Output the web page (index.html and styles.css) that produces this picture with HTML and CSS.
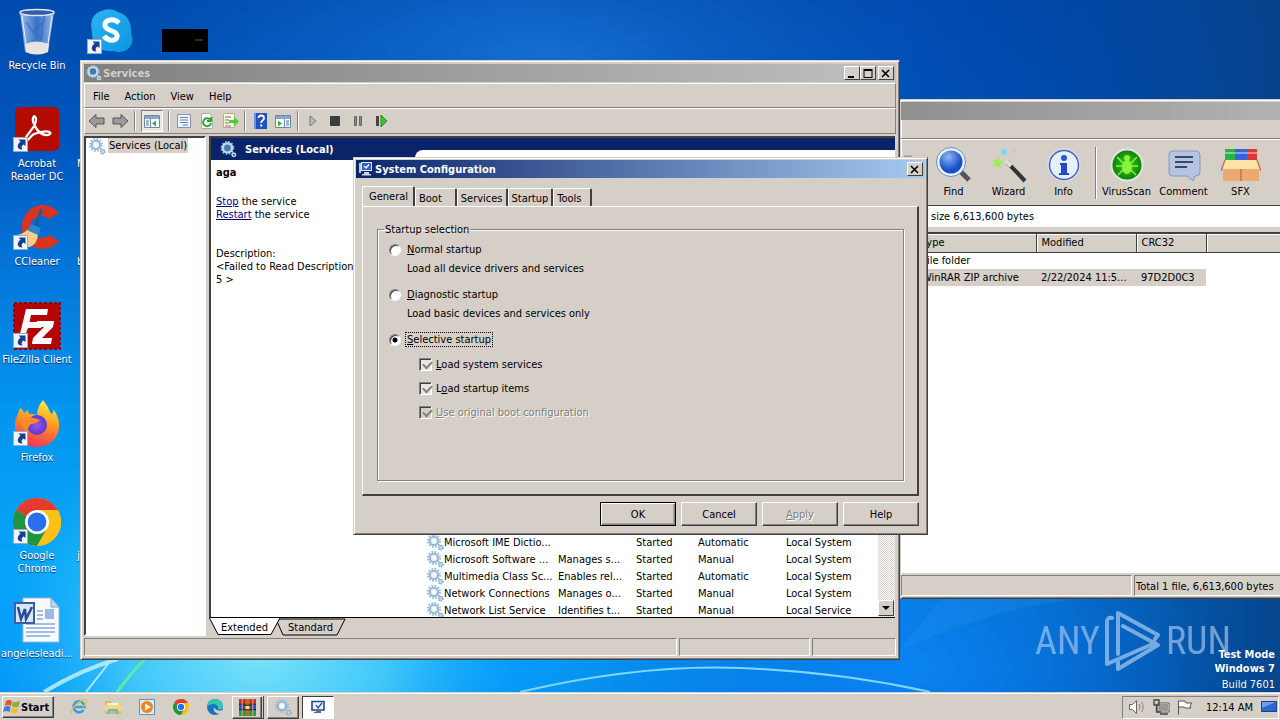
FILE: index.html
```html
<!DOCTYPE html>
<html lang="en">
<head>
<meta charset="utf-8">
<title>Desktop</title>
<link rel="stylesheet" href="styles.css">
</head>
<body>
<svg class="defs" aria-hidden="true">
  <defs>
    <linearGradient id="glass" x1="0" x2="1"><stop offset="0" stop-color="#c9dcf3"/><stop offset=".5" stop-color="#3f78cc"/><stop offset="1" stop-color="#c0d3ee"/></linearGradient>
    <linearGradient id="sky" x1="0" y1="0" x2="1" y2="1"><stop offset="0" stop-color="#2bb5f5"/><stop offset="1" stop-color="#0a96e0"/></linearGradient>
    <linearGradient id="fox" x1=".7" y1="0" x2=".4" y2="1"><stop offset="0" stop-color="#fff04a"/><stop offset=".45" stop-color="#ff9a1f"/><stop offset="1" stop-color="#f5305a"/></linearGradient>
    <radialGradient id="foxcore"><stop offset="0" stop-color="#9a52f2"/><stop offset="1" stop-color="#5a3bc8"/></radialGradient>
    <radialGradient id="lens" cx=".4" cy=".3"><stop offset="0" stop-color="#8fb8f5"/><stop offset="1" stop-color="#1a4fc8"/></radialGradient>
    <radialGradient id="lime"><stop offset="0" stop-color="#38d81a"/><stop offset="1" stop-color="#0d7a0a"/></radialGradient>
  </defs>
  <symbol id="gears" viewBox="0 0 16 16">
    <circle cx="6.500" cy="6.500" r="5.600" fill="none" stroke="#9dbcd6" stroke-width="2" stroke-dasharray="1.700 1.220"/>
    <circle cx="6.500" cy="6.500" r="3.900" fill="#dcebf7" stroke="#8db0cf" stroke-width="1.600"/>
    <circle cx="6.500" cy="6.500" r="1.800" fill="#fff"/>
    <circle cx="13" cy="12.800" r="2" fill="#c5dcee" stroke="#7ea3c4" stroke-width="1.400" stroke-dasharray="1.200 .6"/>
  </symbol>
  <symbol id="gears-bold" viewBox="0 0 16 16">
    <circle cx="7" cy="6.500" r="4.400" fill="#4c7aa6" stroke="#b9dcf5" stroke-width="2.400"/>
    <circle cx="7" cy="6.500" r="6" fill="none" stroke="#b9dcf5" stroke-width="1" stroke-dasharray="1.500 1.650"/>
    <circle cx="13" cy="13" r="1.600" fill="none" stroke="#b9dcf5" stroke-width="1.500"/>
  </symbol>
  <symbol id="shortcut" viewBox="0 0 15 15">
    <rect x=".5" y=".5" width="14" height="14" fill="#f1f6fb" stroke="#9ab"/>
    <path d="M5.500 2.500h7V9l-2-1.500C8.500 8.500 8 10.500 9.500 12.500 5 13 2.500 9 7.500 4.500z" fill="#173f8f"/>
  </symbol>
  <symbol id="chrome" viewBox="0 0 48 48">
    <circle cx="24" cy="24" r="24" fill="#fbc116"/>
    <path d="M24 24 3.200 12A24 24 0 0 1 44.800 12z" fill="#e33b2e"/>
    <path d="M24 24 3.200 12A24 24 0 0 0 24 48L34.400 30z" fill="#229342"/>
    <path d="M24 12H44.800A24 24 0 0 1 24 48L34.400 30z" fill="#fbc116"/>
    <circle cx="24" cy="24" r="12" fill="#fff"/><circle cx="24" cy="24" r="9.400" fill="#2a6ef0"/>
  </symbol>
  <symbol id="pc" viewBox="0 0 16 16">
    <rect x="3.500" y="1.500" width="10" height="8" fill="#2f5fc4" stroke="#dfe7f2"/>
    <path d="M1 2h2v10H1z" fill="#b9c7dc"/>
    <path d="m6 5 2 2 3-3.500" fill="none" stroke="#fff" stroke-width="1.300"/>
    <path d="M6 11h5v2h2v1.500H4V13h2z" fill="#cdd6e2"/>
  </symbol>
  <symbol id="books" viewBox="0 0 16 16">
    <path d="M0 0h16v5H0z" fill="#c8321e"/><path d="M0 5h16v5H0z" fill="#2f4fc0"/><path d="M0 10h16v6H0z" fill="#2d9a3a"/>
    <path d="M0 5h16M0 10h16" stroke="#222"/><path d="M6 0h4v16H6z" fill="#b96a32"/><path d="M5.500 6h5v4h-5z" fill="#f5e08a" stroke="#432"/>
    <path d="M3 0v16M13 0v16" stroke="#eac" stroke-width=".8"/>
  </symbol>
</svg>

<main class="desktop">
  <svg class="wallpaper" viewBox="0 0 1280 692" preserveAspectRatio="none" aria-hidden="true">
    <defs>
      <linearGradient id="base" x1="0" y1="0" x2="0" y2="1"><stop offset="0" stop-color="#004cae"/><stop offset=".2" stop-color="#0055bc"/><stop offset=".4" stop-color="#0478dc"/><stop offset=".6" stop-color="#0396ee"/><stop offset=".82" stop-color="#06a4f8"/><stop offset="1" stop-color="#0699f8"/></linearGradient>
      <linearGradient id="shade" x1="0" x2="1"><stop offset=".4" stop-color="#06409a" stop-opacity="0"/><stop offset=".7" stop-color="#0048b4" stop-opacity=".35"/><stop offset="1" stop-color="#054188" stop-opacity=".95"/></linearGradient>
      <radialGradient id="glow"><stop offset="0" stop-color="#82e6fa"/><stop offset=".5" stop-color="#4fd2fa" stop-opacity=".8"/><stop offset="1" stop-color="#20b8fa" stop-opacity="0"/></radialGradient>
      <radialGradient id="top"><stop offset="0" stop-color="#1a78da" stop-opacity=".8"/><stop offset="1" stop-color="#1470d4" stop-opacity="0"/></radialGradient>
      <radialGradient id="low"><stop offset="0" stop-color="#0a84f4" stop-opacity=".9"/><stop offset="1" stop-color="#0a70e4" stop-opacity="0"/></radialGradient>
    </defs>
    <rect width="1280" height="692" fill="url(#base)"/>
    <ellipse cx="560" cy="60" rx="420" ry="160" fill="url(#top)"/>
    <ellipse cx="260" cy="640" rx="260" ry="240" fill="url(#glow)"/>
    <rect width="1280" height="692" fill="url(#shade)"/>
    <ellipse cx="900" cy="670" rx="320" ry="160" fill="url(#low)"/>
    <path d="M44 692Q80 670 118 659" stroke="#c8f2fb" stroke-width="4" fill="none" opacity=".8"/>
    <path d="M86 692 112 659" stroke="#a8e8fa" stroke-width="2"/>
    <path d="M117 692Q132 672 145 659" stroke="#62e8a0" stroke-width="3" fill="none"/>
    <path d="M520 692Q640 664 740 668T930 692" stroke="#7fd6fa" stroke-width="2" fill="none"/>
    <path d="M900 650Q1000 606 1080 599H940z" fill="#3fa8ff" opacity=".15"/>
  </svg>

  <nav class="icons" aria-label="Desktop icons">
    <button class="icon r1"><span class="art"><svg width="40" height="48" viewBox="0 0 40 48"><path d="M3 4 8 44Q20 49 31 44L37 4z" fill="url(#glass)" opacity=".8"/><path d="M8 36Q19 31 32 36L31 44Q20 49 9 44z" fill="#e6e4e0"/><path d="M9 14 16 24 28 12M27 8l-3 24" stroke="#2f62b8" stroke-width="2" fill="none" opacity=".5"/><ellipse cx="20" cy="4.500" rx="17" ry="3" fill="#2e5dad" stroke="#dfe5ee" stroke-width="1.500"/><path d="m5 8 5 35M35 8l-5 35" stroke="#e7f0fb" stroke-width="1"/></svg></span>Recycle Bin</button>
    <button class="icon r2"><span class="art"><svg width="48" height="48" viewBox="0 0 48 48"><rect x="2" y="1" width="44" height="44" rx="5" fill="#b30b00"/><path d="M12 33C16 25 24 20 23 13 22 7 18 12 21 18 25 28 33 31 37 28 39 24 29 25 21 28 16 31 15 37 11 35" fill="none" stroke="#fff" stroke-width="2.300" stroke-linecap="round"/></svg><svg class="arrow"><use href="#shortcut"/></svg></span>Acrobat<br>Reader DC</button>
    <button class="icon r3"><span class="art"><svg width="48" height="48" viewBox="0 0 48 48"><path d="M46 9A21 22 0 1 0 46 37L36 31A11 11 0 1 1 36 15z" fill="#d8341f"/><path d="m27 5 3 1-6 19-4-1z" fill="#1c5d9e"/><path d="m18 20 10 4-3 7-11-5z" fill="#2b88c8"/><path d="M14 26Q8 32 0 31 4 44 17 43 24 40 25 31z" fill="#f3cf8d"/></svg><svg class="arrow"><use href="#shortcut"/></svg></span>CCleaner</button>
    <button class="icon r4"><span class="art"><svg width="48" height="48" viewBox="0 0 48 48"><rect x="1" y="1" width="46" height="46" fill="#b40404" stroke="#8c0505" stroke-width="2" stroke-dasharray="3 2"/><path d="M13 7h22l-1 6H18l-1.500 7H29l-1 6H15l-4 10H6zM24 19h17l-1 6-11 11h10l-1 6H19l1-6 11-11h-8z" fill="#fff"/></svg><svg class="arrow"><use href="#shortcut"/></svg></span>FileZilla Client</button>
    <button class="icon r5"><span class="art"><svg width="48" height="48" viewBox="0 0 48 48"><path d="M30 0Q35 6 38 14q3-1 2-5c6 7 8 18 4 26C40 43 32 47 24 47 11 47 2 38 2 26 2 18 5 15 7 8q3 1 4 5l4-3q0 5 4 4l5 1Q24 7 30 0z" fill="url(#fox)"/><circle cx="24" cy="25" r="10" fill="url(#foxcore)"/><path d="M8 19Q16 15 27 20 23 24 18 24 14 27 15 33 8 27 8 19z" fill="#ff8a2a"/></svg><svg class="arrow"><use href="#shortcut"/></svg></span>Firefox</button>
    <button class="icon r6"><span class="art"><svg width="48" height="48"><use href="#chrome"/></svg><svg class="arrow"><use href="#shortcut"/></svg></span>Google<br>Chrome</button>
    <button class="icon r7"><span class="art"><svg width="48" height="48" viewBox="0 0 48 48"><path d="M10 2h28l8 9v35H10z" fill="#f7faff" stroke="#9db7e0"/><path d="M38 2v9h8z" fill="#c6d7f2" stroke="#7f9fd0"/><path d="M24 15h6M24 19h6M24 23h6M13 28h29M13 32h29M13 36h29M13 40h24" stroke="#86a8dc" stroke-width="1.500"/><rect x="32" y="13" width="9" height="10" fill="#9db7e6"/><rect x="2" y="7" width="19" height="20" fill="#dbe5f8" stroke="#3b5da8" stroke-width="2"/><path d="m5 11 3 12 4-10 1 10 6-12" fill="none" stroke="#2a4a98" stroke-width="2.500"/></svg></span>angelesleadi...</button>
    <button class="icon r1"><span class="art"><svg width="48" height="48" viewBox="0 0 48 48"><path d="M17 2Q26 0 31 4 45 8 44 25 48 35 41 41 34 46 27 43 5 45 5 24 1 6 17 2z" fill="url(#sky)"/><path d="M32 15Q28 11 23 12 17 13 18 18 19 21 25 23 31 25 30 29 29 33 23 32 19 31 17 28" fill="none" stroke="#fff" stroke-width="5"/></svg><svg class="arrow"><use href="#shortcut"/></svg></span></button>
    <button class="icon r2 cut"><span class="art"></span>M</button>
    <button class="icon r3 cut"><span class="art"></span>b</button>
    <button class="icon r6 cut"><span class="art"></span>j</button>
    <button class="icon r1" aria-label="Hidden item"><span class="art"><svg width="46" height="48" viewBox="0 0 46 48"><path d="M0 21h46v23H0z"/><path d="M33 32h8" stroke="#555"/></svg></span></button>
  </nav>

  <div class="watermark">
    <span>ANY</span>
    <svg width="56" height="62" viewBox="0 0 56 62" fill="none" stroke="#b5d3f5" stroke-width="4" stroke-linejoin="round" stroke-linecap="round"><path d="M7 8Q2 7 2 12V54L50 33M13 44V3L53 25 50 29M18 16 53 35 13 59V52"/></svg>
    <span>RUN</span>
  </div>
  <p class="build"><b>Test Mode</b><b>Windows 7</b><span>Build 7601</span></p>

  <section class="window rar" aria-label="Archive manager">
    <header class="title inactive"></header>
    <div class="rar-menu"></div>
    <div class="rar-tools">
      <button class="tool edge"><svg width="36" height="36" viewBox="0 0 36 36"><path d="M4 4h12v5h5v20H12z" fill="#9ca3b8"/></svg></button>
      <button class="tool"><svg width="36" height="36" viewBox="0 0 36 36"><path d="m23 23 10 10" stroke="#555" stroke-width="5"/><circle cx="15" cy="15" r="13" fill="url(#lens)" stroke="#eaf1fb" stroke-width="3"/><circle cx="15" cy="15" r="14.500" fill="none" stroke="#6c8fc6"/></svg>Find</button>
      <button class="tool"><svg width="36" height="36" viewBox="0 0 36 36"><path d="m16 15 18 19" stroke="#333" stroke-width="4"/><path d="m15 14 5 5" stroke="#ddd" stroke-width="4"/><path d="m7 10 2 4 4 1-4 2 1 4-4-2-4 1 2-4-2-3 4 0z" fill="#9af04a"/><circle cx="13" cy="5" r="3" fill="#6fdcf2"/><circle cx="23" cy="4" r="2" fill="#f3b4bb"/></svg>Wizard</button>
      <button class="tool"><svg width="36" height="36" viewBox="0 0 36 36"><circle cx="18" cy="18" r="16.500" fill="#d4e2f8"/><circle cx="18" cy="18" r="14.500" fill="#e6effc" stroke="#4666b4" stroke-width="1.500"/><circle cx="18" cy="11" r="3" fill="#2d55d0"/><path d="M14 16h7v10h2v2H13v-2h2v-8h-1z" fill="#2348c4"/></svg>Info</button>
      <i class="rule"></i>
      <button class="tool wide"><svg width="36" height="36" viewBox="0 0 36 36"><circle cx="18" cy="18" r="15.500" fill="url(#lime)" stroke="#dbe8da" stroke-width="2"/><ellipse cx="18" cy="20" rx="5" ry="7" fill="#8bf23c"/><circle cx="18" cy="11" r="3" fill="#8bf23c"/><path d="m8 10 6 6M28 10l-6 6M7 19h7M29 19h-7M9 28l5-5M27 28l-5-5" stroke="#8bf23c" stroke-width="1.500"/></svg>VirusScan</button>
      <button class="tool"><svg width="36" height="36" viewBox="0 0 36 36"><path d="M6 4h24q4 0 4 4v17q0 4-4 4h-1l-2 5-6-5H6q-3 0-3-4V8q0-4 3-4z" fill="#b5c5df" stroke="#8499bd"/><path d="M9 10h18M9 15h18M9 20h12" stroke="#35486f" stroke-width="2"/></svg>Comment</button>
      <button class="tool wide"><svg width="40" height="36" viewBox="0 0 40 36"><path d="M4 2h10v14H4z" fill="#28b34a"/><path d="M14 2h12v14H14z" fill="#3565d8"/><path d="M26 2h10v14H26z" fill="#da3a34"/><path d="M4 6h10M14 6h12M26 6h10" stroke="#fff" stroke-opacity=".4" stroke-width="2"/><path d="M2 16h36v18H2z" fill="#ecaa70"/><path d="M4 13h32l4 9H0z" fill="#fbe3a8"/><path d="M4 13 0 24M36 13l4 11M20 22v12" stroke="#c07a48" stroke-width="1.500"/></svg>SFX</button>
    </div>
    <div class="address">size 6,613,600 bytes</div>
    <div class="rar-list">
      <table>
        <thead><tr><th class="c-type">Type</th><th class="c-mod">Modified</th><th class="c-crc">CRC32</th><th></th></tr></thead>
        <tbody>
          <tr><td>File folder</td><td></td><td></td><td></td></tr>
          <tr class="picked"><td>WinRAR ZIP archive</td><td>2/22/2024 11:5...</td><td>97D2D0C3</td><td></td></tr>
        </tbody>
      </table>
    </div>
    <footer class="status rar-status"><span class="grow"></span><span class="total">Total 1 file, 6,613,600 bytes</span></footer>
  </section>

  <section class="window services" aria-label="Services">
    <header class="title inactive">
      <svg width="16" height="16"><use href="#gears-bold"/></svg><h2>Services</h2>
      <span class="caps">
        <button aria-label="Minimize"><svg width="10" height="9"><path d="M1 7h6v2H1z"/></svg></button>
        <button aria-label="Maximize"><svg width="10" height="9"><path d="M.5 0h9v9h-9z M1.500 2v6h7V2z" fill-rule="evenodd"/></svg></button>
        <button class="apart" aria-label="Close"><svg width="10" height="9"><path d="m1 1 7 7M8 1 1 8" stroke="#000" stroke-width="1.600"/></svg></button>
      </span>
    </header>
    <nav class="menu"><button>File</button><button>Action</button><button>View</button><button>Help</button></nav>
    <div class="toolbar">
      <button aria-label="Back"><svg width="18" height="16" viewBox="0 0 18 16"><path d="m1 8 7-6.500V5h8v6H8v3.500z" fill="#999" stroke="#555"/></svg></button>
      <button aria-label="Forward"><svg width="18" height="16" viewBox="0 0 18 16"><path d="m17 8-7-6.500V5H2v6h8v3.500z" fill="#999" stroke="#555"/></svg></button>
      <i></i>
      <button class="pressed" aria-label="Show tree"><svg width="18" height="16" viewBox="0 0 18 16"><path d="M1.500 2.500h15v12h-15z" fill="#fff" stroke="#7186a8"/><path d="M2 3h14v3H2z" fill="#8ba4cf"/><path d="M7.500 6v8" stroke="#7186a8"/><path d="M3 8h3M3 10h3M3 12h3" stroke="#4a6fb5"/><path d="m13 7.500-4 3 4 3z" fill="#3fae2a"/></svg></button>
      <i></i>
      <button aria-label="Properties"><svg width="18" height="16" viewBox="0 0 18 16"><path d="M2.500 1.500h13v13h-13z" fill="#eef3fa" stroke="#8395b0"/><path d="M5 4.500h8M5 7h8M5 9.500h8M8 12h5" stroke="#6b83aa"/></svg></button>
      <button aria-label="Refresh"><svg width="18" height="16" viewBox="0 0 18 16"><path d="M3.500.5h8l3 3v12h-11z" fill="#fafcf8" stroke="#a8b0a0"/><path d="M12 6.500A4 4 0 1 0 13 10M13 4v4H9" fill="none" stroke="#2f9e2a" stroke-width="1.800"/></svg></button>
      <button aria-label="Export"><svg width="18" height="16" viewBox="0 0 18 16"><path d="M2.500.5h11v14h-11z" fill="#fbf8df" stroke="#b5ae8c"/><path d="M4 4h6M4 7h4M4 10h4M4 13h6" stroke="#777"/><path d="M8 7h5V4l5 4.500-5 4.500v-3H8z" fill="#4ccc36"/></svg></button>
      <i></i>
      <button aria-label="Help"><svg width="18" height="16" viewBox="0 0 18 16"><path d="M3 0h13v16H3z" fill="#2350bd"/><path d="M3 0h2v16H3z" fill="#6d8fdf"/><path d="M7.500 5q0-2.500 2.700-2.500T13 5q0 1.500-1.500 2.400T10.300 10" fill="none" stroke="#fff" stroke-width="1.800"/><path d="M9.300 11.500h2v2h-2z" fill="#fff"/></svg></button>
      <button aria-label="Action pane"><svg width="18" height="16" viewBox="0 0 18 16"><path d="M1.500 2.500h15v12h-15z" fill="#fff" stroke="#7186a8"/><path d="M2 3h14v3H2z" fill="#8ba4cf"/><path d="M10.500 6v8" stroke="#7186a8"/><path d="M12 8h3M12 10h3M12 12h3" stroke="#4a6fb5"/><path d="m4 7.500 4 3-4 3z" fill="#3fae2a"/></svg></button>
      <i></i>
      <button aria-label="Start service"><svg width="18" height="16" viewBox="0 0 18 16"><path d="m6 3 6 5-6 5z" fill="#bbb" stroke="#777"/></svg></button>
      <button aria-label="Stop service"><svg width="18" height="16" viewBox="0 0 18 16"><rect x="3" y="3" width="10" height="10" rx="1" fill="#3c3c3c"/></svg></button>
      <button aria-label="Pause service"><svg width="18" height="16" viewBox="0 0 18 16"><path d="M4.500 3.500h2v9h-2zM9.500 3.500h2v9h-2z" fill="#888" stroke="#666"/></svg></button>
      <button aria-label="Restart service"><svg width="18" height="16" viewBox="0 0 18 16"><path d="M3 3h3v10H3z" fill="#444"/><path d="m8 2 6 6-6 6z" fill="#3cc22c" stroke="#2a8f20"/></svg></button>
    </div>
    <div class="panes">
      <div class="tree"><button><svg width="17" height="17"><use href="#gears"/></svg><span>Services (Local)</span></button></div>
      <div class="right">
        <div class="view">
          <div class="banner"><svg width="17" height="17"><use href="#gears-bold"/></svg><h3>Services (Local)</h3></div>
          <div class="view-body">
            <div class="detail">
              <h4>aga</h4>
              <p><a href="#stop">Stop</a> the service<br><a href="#restart">Restart</a> the service</p>
              <p class="desc">Description:<br>&lt;Failed to Read Description.<br>5 &gt;</p>
            </div>
            <div class="list">
              <table>
                <tr><td class="n"><svg width="17" height="17"><use href="#gears"/></svg>Microsoft IME Dictio...</td><td class="d"></td><td class="s">Started</td><td class="t">Automatic</td><td>Local System</td></tr>
                <tr><td class="n"><svg width="17" height="17"><use href="#gears"/></svg>Microsoft Software ...</td><td>Manages s...</td><td>Started</td><td>Manual</td><td>Local System</td></tr>
                <tr><td class="n"><svg width="17" height="17"><use href="#gears"/></svg>Multimedia Class Sc...</td><td>Enables rel...</td><td>Started</td><td>Automatic</td><td>Local System</td></tr>
                <tr><td class="n"><svg width="17" height="17"><use href="#gears"/></svg>Network Connections</td><td>Manages o...</td><td>Started</td><td>Manual</td><td>Local System</td></tr>
                <tr><td class="n"><svg width="17" height="17"><use href="#gears"/></svg>Network List Service</td><td>Identifies t...</td><td>Started</td><td>Manual</td><td>Local Service</td></tr>
              </table>
              <div class="scroll"><button aria-label="Scroll down"><svg width="8" height="4"><path d="M0 0h8L4 4z"/></svg></button></div>
            </div>
          </div>
        </div>
        <div class="sheet-tabs" role="tablist">
          <svg class="tab-shapes" width="140" height="18" aria-hidden="true"><path d="M67 1h69l-8 16H74z" fill="#d5cfc8" stroke="#000"/><path d="M.5 0 9 16.500h53L71 0z" fill="#fff"/><path d="M.5 0 9 16.500h53L71 0" fill="none" stroke="#000"/></svg>
          <button role="tab">Extended</button><button role="tab">Standard</button>
        </div>
      </div>
    </div>
    <footer class="status"><span class="grow"></span><span class="s2"></span><span class="s3"></span></footer>
  </section>

  <section class="window dialog" role="dialog" aria-label="System Configuration">
    <header class="title active">
      <svg width="16" height="16"><use href="#pc"/></svg><h2>System Configuration</h2>
      <span class="caps"><button aria-label="Close"><svg width="10" height="9"><path d="m1 1 7 7M8 1 1 8" stroke="#000" stroke-width="1.600"/></svg></button></span>
    </header>
    <div class="dialog-body">
      <div class="tabs" role="tablist"><button role="tab" class="on">General</button><button role="tab" class="t2">Boot</button><button role="tab">Services</button><button role="tab">Startup</button><button role="tab" class="t5">Tools</button></div>
      <div class="panel">
        <fieldset>
          <legend>Startup selection</legend>
          <div class="choice"><input type="radio" name="mode" id="m1"><label for="m1"><u>N</u>ormal startup</label></div>
          <p class="hint">Load all device drivers and services</p>
          <div class="choice"><input type="radio" name="mode" id="m2"><label for="m2"><u>D</u>iagnostic startup</label></div>
          <p class="hint">Load basic devices and services only</p>
          <div class="choice"><input type="radio" name="mode" id="m3" checked><label class="focus" for="m3"><u>S</u>elective startup</label></div>
          <div class="checks">
            <div class="check"><input type="checkbox" id="c1" checked><label for="c1"><u>L</u>oad system services</label></div>
            <div class="check"><input type="checkbox" id="c2" checked><label for="c2">L<u>o</u>ad startup items</label></div>
            <div class="check"><input type="checkbox" id="c3" checked disabled><label for="c3"><u>U</u>se original boot configuration</label></div>
          </div>
        </fieldset>
      </div>
      <div class="actions"><button class="default">OK</button><button>Cancel</button><button disabled><u>A</u>pply</button><button>Help</button></div>
    </div>
  </section>
</main>

<footer class="taskbar">
  <button class="start"><svg width="18" height="16" viewBox="0 0 18 16"><path d="M3 2Q6 0 9 2L8 7Q5 5 2 7z" fill="#e8542a"/><path d="M10 2.500Q13 4 17 2L15.500 7.500Q12 9 9 7.500z" fill="#7cb82e"/><path d="M1.500 8Q5 6 7.500 8L6.500 13Q3 11 0 13z" fill="#3a7fe0"/><path d="M8.500 8.500Q12 10 15 8.500L14 14Q11 15 7.500 13.500z" fill="#f5c02a"/></svg>Start</button>
  <div class="quick">
    <button aria-label="Internet Explorer"><svg width="18" height="18" viewBox="0 0 18 18"><path d="M13.500 12A5.500 5.500 0 1 1 14.500 9H5" fill="none" stroke="#39a0e0" stroke-width="2.600"/><path d="M2 16Q-1 13 7 6T16 2Q18 4 13 9" fill="none" stroke="#e8c040" stroke-width="1.400"/></svg></button>
    <button aria-label="Explorer"><svg width="18" height="18" viewBox="0 0 18 18"><path d="M1 3h6l1 2h9v11H1z" fill="#e0bb55"/><path d="M3 5h12v4H3z" fill="#fdf6d0"/><path d="M1 7h16v6H1z" fill="#f3d980"/><path d="M4 11h10v5h-2v-3H6v3H4z" fill="#64b5e8"/></svg></button>
    <button aria-label="Media Player"><svg width="18" height="18" viewBox="0 0 18 18"><path d="M1.500 1.500h15v15h-15z" fill="#dceaf5" stroke="#5a94c8"/><circle cx="9" cy="9" r="6" fill="#f08418"/><path d="m7 5.500 6 3.500-6 3.500z" fill="#fff"/></svg></button>
    <button aria-label="Chrome"><svg width="16" height="16"><use href="#chrome"/></svg></button>
    <button aria-label="Edge"><svg width="18" height="18" viewBox="0 0 18 18"><circle cx="9" cy="9" r="8" fill="#1673c4"/><path d="M1 9Q2 1 9 1t8 7Q17 12 12 11.500 13 7 8 6 3 6 1 9z" fill="#35c6b0"/><path d="M17 12Q10 14 8 9 6 14 13 16 16 15 17 12z" fill="#d5cfc8"/></svg></button>
  </div>
  <div class="tasks">
    <button aria-label="WinRAR" class="stack"><svg width="17" height="17"><use href="#books"/></svg></button>
    <button aria-label="Services"><svg width="17" height="17"><use href="#gears"/></svg></button>
    <button aria-label="System Configuration" class="current"><svg width="16" height="16" viewBox="0 0 16 16"><path d="M2 2.500h12v8.500H2z" fill="#eaf1fb" stroke="#22459a" stroke-width="1.600"/><path d="m6 6 2 3 4-5" fill="none" stroke="#22459a" stroke-width="1.300"/><path d="M6 12h5v2H4v-1h2z" fill="#667"/></svg></button>
  </div>
  <div class="tray">
    <svg width="18" height="16" viewBox="0 0 18 16"><path d="M1.500 5.500h3l4-4v13l-4-4h-3z" fill="#fff" stroke="#666"/><path d="M11 5q2 3 0 6M13.500 3q3.500 5 0 10" fill="none" stroke="#888"/></svg>
    <svg width="18" height="16" viewBox="0 0 18 16"><path d="M6.500 4.500h10v8h-10z" fill="#999" stroke="#fff"/><path d="M6 4h11v9H6z" fill="none" stroke="#555"/><path d="M2 1h5v5H2zM4.500 6v7H9M8 15h8" fill="none" stroke="#444" stroke-width="1.300"/></svg>
    <svg width="18" height="16" viewBox="0 0 18 16"><path d="M2.500 15.500V1.500M3 2h6l1 2h6l-2 3 1 2H9L8 8H3" fill="#fff" stroke="#555"/></svg>
    <time>12:14 AM</time>
    <svg width="16" height="14" viewBox="0 0 16 14"><path d="M.5 1.500h15v10H.5z" fill="#2c66cf" stroke="#1b3f86"/><path d="M1 2h14L1 8z" fill="#6d9eea"/></svg>
  </div>
</footer>
</body>
</html>
```

FILE: styles.css
```css
* { box-sizing: border-box; }
:root { --face: #d5cfc8; --dark: #404040; --mid: #808080; }
body {
  margin: 0; height: 100vh; display: flex; flex-direction: column; overflow: hidden;
  font: 11px/13px "DejaVu Sans Condensed", "DejaVu Sans", sans-serif; color: #000; background: #0478dc;
}
button { font: inherit; color: inherit; background: none; border: 0; padding: 0; margin: 0; }
h2, h3, h4, p { margin: 0; font-size: 11px; }
p { font-weight: normal; }
svg { display: block; flex: none; }
.defs { position: absolute; width: 0; height: 0; }

.desktop { flex: 1; position: relative; overflow: hidden; }
.wallpaper { position: absolute; inset: 0; width: 100%; height: 100%; }

.icons {
  position: relative; padding-top: 8px; display: grid; grid-auto-flow: column;
  grid-template-rows: repeat(7, 98px); grid-auto-columns: 74px; justify-content: start;
}
.r1 { grid-row: 1; } .r2 { grid-row: 2; } .r3 { grid-row: 3; } .r4 { grid-row: 4; }
.r5 { grid-row: 5; } .r6 { grid-row: 6; } .r7 { grid-row: 7; }
.icon {
  display: flex; flex-direction: column; align-items: center; color: #fff; white-space: nowrap;
  text-shadow: 0 1px 1px #002a60;
}
.icon.cut { align-items: flex-start; padding-left: 3px; }
.art { position: relative; height: 51px; min-width: 48px; display: flex; justify-content: center; }
.art .arrow { position: absolute; left: 0; bottom: 5px; width: 15px; height: 15px; }

.watermark {
  position: absolute; right: 49px; bottom: 20px; display: flex; align-items: center; gap: 5px;
  font: 38px/62px "Liberation Sans Narrow", "Roboto Condensed", Roboto, sans-serif; color: #a9caf2; opacity: .65;
}
.build {
  position: absolute; right: 5px; bottom: 0; display: flex; flex-direction: column; align-items: flex-end;
  line-height: 14px; color: #fff; text-shadow: 0 0 1px #002a60;
}
.build span { margin-top: 2px; }

.window {
  position: absolute; display: flex; flex-direction: column; background: var(--face); padding: 2px;
  border: 1px solid; border-color: var(--face) var(--dark) var(--dark) var(--face);
  box-shadow: inset 1px 1px #fff, inset -1px -1px var(--mid);
}
.title { display: flex; align-items: center; gap: 1px; height: 18px; padding: 0 2px; }
.title h2 { flex: 1; }
.inactive { background: linear-gradient(90deg, #808080, #c0c0c0); color: #d5cfc8; }
.active { background: linear-gradient(90deg, #0a246a, #a6caf0); color: #fff; }
.caps { display: flex; }
.caps button {
  width: 16px; height: 14px; display: flex; align-items: center; justify-content: center;
  background: var(--face); border: 1px solid; border-color: #fff var(--dark) var(--dark) #fff;
}
.caps .apart { margin-left: 2px; }

.rar { left: 900px; top: 99px; width: 540px; height: 500px; padding: 2px 0; }
.rar .title { background: linear-gradient(90deg, #909090, #c0c0c0); }
.rar-menu { height: 19px; border-bottom: 1px solid var(--mid); box-shadow: 0 1px #fff; }
.rar-tools { display: flex; height: 66px; align-items: flex-start; padding-top: 8px; }
.tool { width: 55px; display: flex; flex-direction: column; align-items: center; gap: 2px; line-height: 14px; }
.tool.edge { width: 25px; align-items: flex-start; }
.tool.wide { width: 59px; }
.tool.edge svg { width: 25px; }
.rule { height: 52px; border-left: 1px solid var(--mid); border-right: 1px solid #fff; margin-left: 4px; }
.address {
  height: 23px; padding: 4px 0 0 30px; background: #fff;
  border-top: 1px solid var(--dark); border-bottom: 1px solid var(--face);
}
.rar-list { flex: 1; margin-top: 4px; background: #fff; border-top: 2px solid var(--dark); }
.rar-list table { border-collapse: collapse; table-layout: fixed; width: 100%; }
.rar-list th {
  height: 18px; padding: 0 5px; text-align: left; font-weight: normal; background: var(--face);
  border-right: 1px solid var(--dark); border-bottom: 1px solid var(--dark); box-shadow: inset 1px 1px #fff;
}
.rar-list td { height: 17px; padding: 0 5px; white-space: nowrap; }
.rar-list td:first-child, .rar-list th:first-child { padding-left: 21px; }
.c-type { width: 135px; } .c-mod { width: 100px; } .c-crc { width: 70px; }
.picked td:not(:last-child) { background: var(--face); }

.status { display: flex; gap: 2px; height: 20px; padding-top: 2px; }
.status span { border: 1px solid; border-color: var(--mid) #fff #fff var(--mid); }
.status .grow { flex: 1; }
.rar-status { height: 23px; }
.rar-status .grow { flex: none; width: 231px; }
.status .total { width: 200px; padding: 4px 0 0 1px; }
.s2 { width: 131px; } .s3 { width: 84px; }

.services { left: 80px; top: 60px; width: 820px; height: 600px; padding: 3px; }
.menu { display: flex; height: 25px; padding: 2px 8px 0; gap: 15px; align-items: center; border: 1px solid; border-color: #fff var(--mid) var(--mid) #fff; margin-top: 1px; }
.toolbar { display: flex; height: 26px; align-items: center; padding: 0 3px; gap: 5px; border: 1px solid; border-color: #fff var(--mid) var(--mid) #fff; }
.toolbar i { width: 2px; height: 20px; border-left: 1px solid var(--mid); border-right: 1px solid #fff; }
.toolbar .pressed { padding: 2px 1px; background: #ebe8e3; border: 1px solid; border-color: var(--mid) #fff #fff var(--mid); }
.panes { flex: 1; min-height: 0; display: flex; gap: 3px; margin-top: 2px; }
.tree { width: 122px; background: #fff; border: 2px solid; border-color: var(--dark) #fff #fff var(--dark); }
.tree button { display: flex; align-items: flex-start; gap: 2px; padding-left: 3px; }
.tree span { background: var(--face); padding: 0 1px; line-height: 15px; }
.right { flex: 1; display: flex; flex-direction: column; }
.view { flex: 1; display: flex; flex-direction: column; background: #fff; border: solid; border-width: 2px 0 0 2px; border-color: var(--dark); border-bottom: 1px solid #000; margin-right: 1px; }
.banner { height: 22px; background: #0a246a; color: #fff; display: flex; align-items: center; gap: 8px; padding-left: 9px; }
.view-body { flex: 1; display: flex; }
.detail { width: 204px; padding: 6px 5px; white-space: nowrap; }
.detail p { margin-top: 16px; }
.detail .desc { margin-top: 26px; }
.detail a { color: #00007f; }
.list { flex: 1; display: flex; align-items: flex-end; overflow: hidden; border-radius: 8px 0 0; margin-top: -10px; padding-left: 12px; background: #fff; }
.list table { flex: 1; border-collapse: collapse; table-layout: fixed; margin-bottom: -2px; }
.list td { height: 17px; padding: 0; line-height: 17px; white-space: nowrap; }
.n svg { float: left; }
.n { width: 131px; } .d { width: 78px; } .s { width: 62px; } .t { width: 88px; }
.scroll { align-self: stretch; width: 17px; display: flex; align-items: flex-end; padding-bottom: 1px; background: repeating-conic-gradient(#fff 0 25%, var(--face) 0 50%) 0 0 / 2px 2px; margin-top: 12px; }
.scroll button { width: 16px; height: 16px; display: grid; place-items: center; background: var(--face); border: 1px solid; border-color: #fff var(--dark) var(--dark) #fff; }
.sheet-tabs { position: relative; height: 18px; display: flex; padding: 1px 0 0 12px; gap: 20px; }
.tab-shapes { position: absolute; left: 0; top: 0; }
.sheet-tabs button { position: relative; }

.dialog { left: 353px; top: 157px; width: 575px; height: 378px; }
.dialog-body { flex: 1; display: flex; flex-direction: column; padding: 8px 6px 6px; }
.tabs { display: flex; align-items: flex-end; height: 20px; }
.tabs button {
  height: 18px; padding: 1px 3px 0; border: 1px solid; border-width: 1px 2px 0 1px;
  border-color: #fff var(--dark) #fff #fff; border-radius: 2px 2px 0 0;
}
.tabs .on { height: 20px; padding: 0 5px 1px 6px; }
.tabs .t2 { padding-right: 13px; }
.tabs .t5 { padding-right: 9px; }
.panel { flex: 1; padding: 16px 13px 13px 14px; border: 1px solid; border-width: 1px 2px 2px 1px; border-color: #fff var(--dark) var(--dark) #fff; }
fieldset { height: 100%; margin: 0; padding: 6px 11px 0; border: 1px solid var(--mid); box-shadow: inset 1px 1px #fff, 1px 1px #fff; }
legend { padding: 0 1px; margin-left: -5px; }
.choice { display: flex; align-items: center; gap: 4px; height: 15px; }
.choice label { padding: 0 1px; border: 1px solid transparent; }
.choice .focus { border: 1px dotted #000; }
.choice input {
  appearance: none; width: 12px; height: 12px; margin: 0; border-radius: 50%; background: #fff;
  border: 1px solid; border-color: var(--mid) #fff #fff var(--mid); box-shadow: inset 1px 1px var(--dark);
}
.choice input:checked { background: radial-gradient(circle, #000 0 2px, #fff 3px); }
.hint { margin: 5px 0 12px 18px; }
.checks { display: flex; flex-direction: column; gap: 11px; margin: 11px 0 0 30px; }
.check { display: flex; align-items: center; gap: 4px; }
.check input {
  appearance: none; width: 13px; height: 13px; margin: 0; background: #eae7e3; position: relative;
  border: 1px solid; border-color: var(--mid) #fff #fff var(--mid); box-shadow: inset 1px 1px var(--dark);
}
.check input:disabled { background: var(--face); }
.check input:checked::after {
  content: ""; position: absolute; left: 3px; top: 2px; width: 7px; height: 4px;
  border: solid var(--mid); border-width: 0 0 2px 2px; transform: rotate(-45deg);
}
input:disabled + label, .actions button:disabled { color: var(--mid); text-shadow: 1px 1px #fff; }
.actions { display: flex; justify-content: flex-end; gap: 5px; margin-top: 6px; }
.actions button {
  width: 76px; height: 24px; border: 1px solid; border-color: #fff var(--dark) var(--dark) #fff;
  box-shadow: inset -1px -1px var(--mid);
}
.actions .default { border-color: #000; box-shadow: inset 1px 1px #fff, inset -1px -1px var(--mid), inset -2px -2px #a8a49e; }

.taskbar { flex: none; height: 28px; display: flex; align-items: center; padding: 2px 1px 0 2px; background: var(--face); box-shadow: inset 0 1px var(--face), inset 0 2px #fff; }
.start, .tasks button { border: 1px solid; border-color: #fff var(--dark) var(--dark) #fff; box-shadow: inset -1px -1px var(--mid); }
.start { display: flex; align-items: center; gap: 0; width: 52px; height: 22px; font-weight: bold; }
.quick { display: flex; padding-left: 8px; }
.quick button { width: 34px; display: grid; place-items: center; }
.tasks { display: flex; gap: 3px; }
.tasks button { width: 32px; height: 23px; display: grid; place-items: center; }
.tasks .stack { border-right-width: 3px; border-right-style: double; }
.tasks .current { background: #fff; border-color: var(--dark) #fff #fff var(--dark); box-shadow: none; }
.tray { margin-left: auto; display: flex; align-items: center; gap: 6px; height: 23px; padding: 0 1px 0 5px; border: 1px solid; border-color: var(--mid) #fff #fff var(--mid); }
.tray time { margin: 0 2px 0 6px; }
```
